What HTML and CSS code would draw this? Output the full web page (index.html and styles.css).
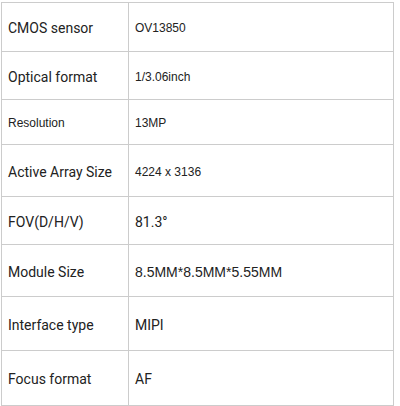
FILE: index.html
```html
<!DOCTYPE html>
<html>
<head>
<meta charset="utf-8">
<link rel="stylesheet" href="styles.css">
</head>
<body>
<table class="spec">
  <colgroup><col class="c1"><col class="c2"></colgroup>
  <tr class="r1"><td class="k">CMOS sensor</td><td class="v a12">OV13850</td></tr>
  <tr class="r2"><td class="k">Optical format</td><td class="v a12">1/3.06inch</td></tr>
  <tr class="r3"><td class="k a12">Resolution</td><td class="v a12">13MP</td></tr>
  <tr class="r4"><td class="k">Active Array Size</td><td class="v a12">4224 x 3136</td></tr>
  <tr class="r5"><td class="k">FOV(D/H/V)</td><td class="v">81.3°</td></tr>
  <tr class="r6"><td class="k">Module Size</td><td class="v a14">8.5MM*8.5MM*5.55MM</td></tr>
  <tr class="r7"><td class="k">Interface type</td><td class="v">MIPI</td></tr>
  <tr class="r8"><td class="k">Focus format</td><td class="v">AF</td></tr>
</table>
</body>
</html>
```
FILE: styles.css
```css
html, body {
  margin: 0;
  padding: 0;
  background: #ffffff;
}
body {
  padding: 2px 0 0 1px;
}
.spec {
  border-collapse: collapse;
  width: 393px;
  table-layout: fixed;
  color: #222222;
  font-family: Roboto, "Liberation Sans", sans-serif;
  font-size: 14px;
}
.c1 { width: 127px; }
.spec td {
  border: 1px solid #cccccc;
  padding: 2px 0 0 6px;
  vertical-align: middle;
  line-height: 18px;
}
.a12 {
  font-family: "Liberation Sans", Arial, sans-serif;
  font-size: 12px;
}
.a14 {
  font-family: "Liberation Sans", Arial, sans-serif;
  font-size: 14px;
}
.r1 { height: 49px; }
.r2 { height: 48px; }
.r3 { height: 45px; }
.r4 { height: 52px; }
.r5 { height: 48px; }
.r6 { height: 52px; }
.r7 { height: 54px; }
.r8 { height: 55px; }
```
